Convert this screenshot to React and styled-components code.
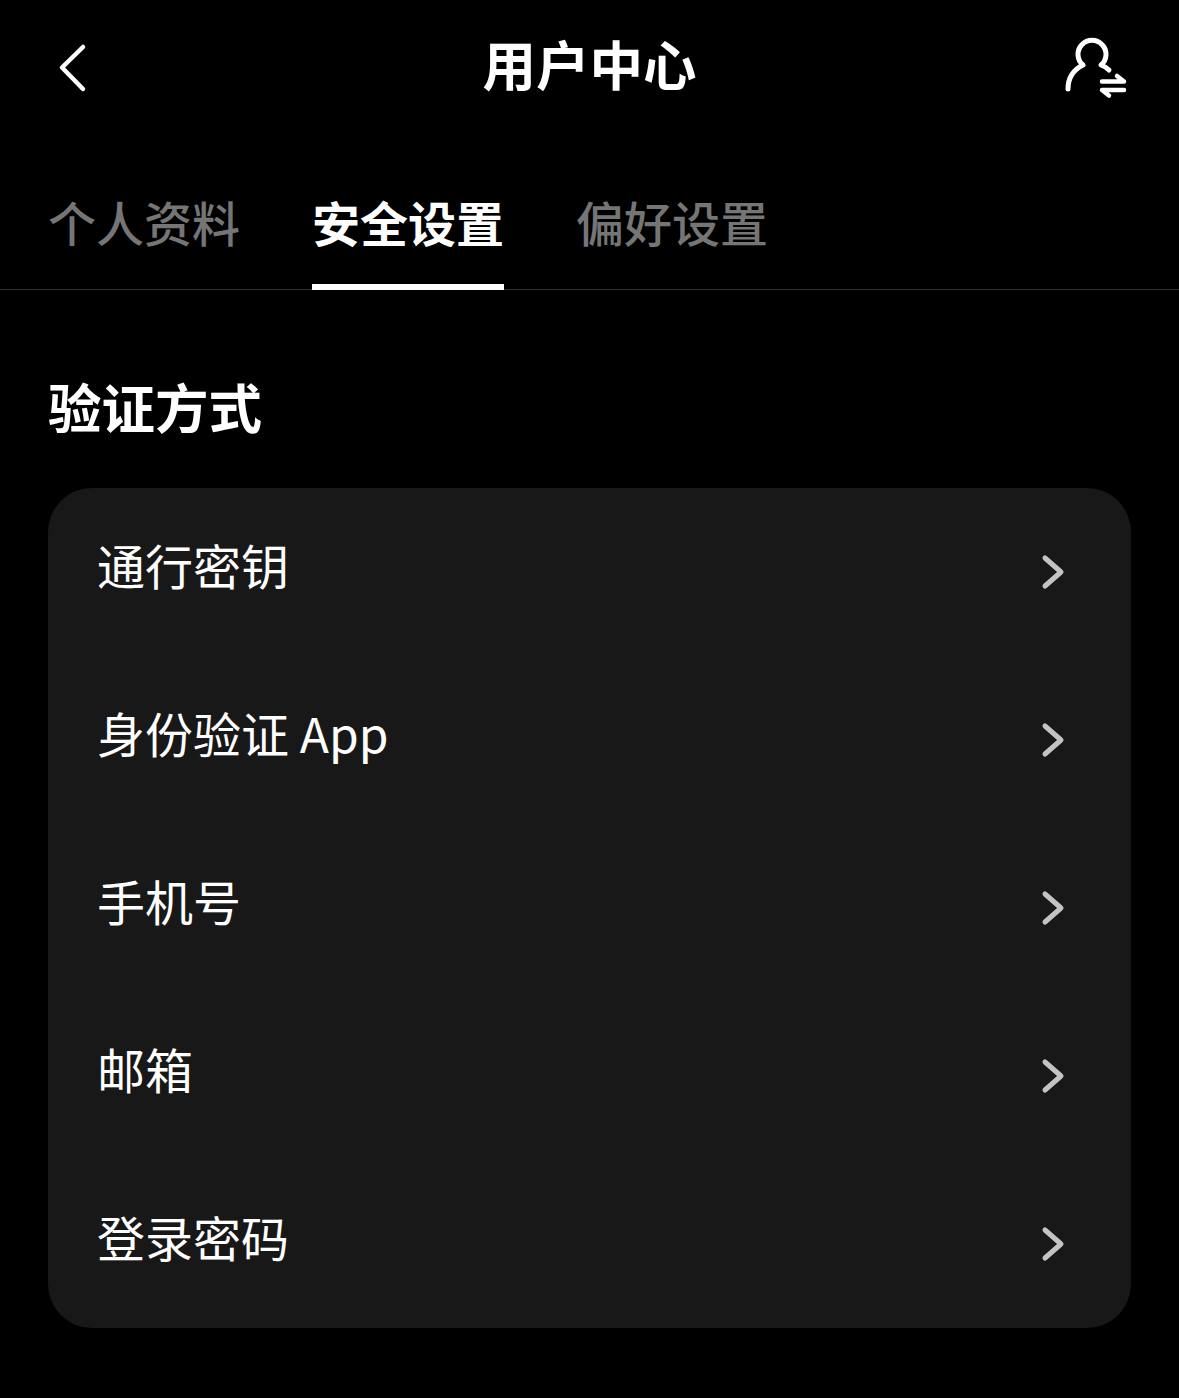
import styled, { createGlobalStyle } from "styled-components";

const items = ["通行密钥", "身份验证 App", "手机号", "邮箱", "登录密码"];
const tabs = ["个人资料", "安全设置", "偏好设置"];

const App = () => {
  return (
    <Page>
      <GlobalStyle />
      <Header>
        <HeaderIcon>
          <svg width="40" height="60" viewBox="0 0 40 60" fill="none">
            <path d="M31 10 L10 30.5 L31 52" stroke="#fff" strokeWidth="4.5" strokeLinecap="round" strokeLinejoin="round" />
          </svg>
        </HeaderIcon>
        <Title>用户中心</Title>
        <HeaderIcon>
          <svg width="64" height="64" viewBox="0 0 64 64" fill="none">
            <path
              d="M5 54 C5 43 10 35 20 30 A14 14 0 1 1 38 30 C41 31 44 33 46 35"
              stroke="#fff"
              strokeWidth="5"
              strokeLinecap="round"
              strokeLinejoin="round"
            />
            <path d="M39 46.5 H61 L54 41" stroke="#fff" strokeWidth="4.5" strokeLinecap="round" strokeLinejoin="round" />
            <path d="M61 55 H39 L46 60.5" stroke="#fff" strokeWidth="4.5" strokeLinecap="round" strokeLinejoin="round" />
          </svg>
        </HeaderIcon>
      </Header>

      <TabBar>
        {tabs.map((tab, i) => (
          <Tab key={tab} $active={i === 1}>
            {tab}
          </Tab>
        ))}
      </TabBar>

      <Section>
        <SectionTitle>验证方式</SectionTitle>
        <Card>
          {items.map((item) => (
            <Row key={item}>
              <RowLabel>{item}</RowLabel>
              <svg width="24" height="36" viewBox="0 0 24 36" fill="none">
                <path d="M4 4 L20 18 L4 32" stroke="#c4c4c4" strokeWidth="5" strokeLinecap="round" strokeLinejoin="round" />
              </svg>
            </Row>
          ))}
        </Card>
      </Section>
    </Page>
  );
};

const GlobalStyle = createGlobalStyle`
  html, body {
    margin: 0;
    background: #000;
  }
`;

const Page = styled.div`
  width: 1179px;
  height: 1398px;
  background: #000;
  color: #fff;
  font-family: "Noto Sans CJK SC", "Inter", sans-serif;
  overflow: hidden;
`;

const Header = styled.div`
  height: 134px;
  padding: 0 52px;
  display: flex;
  align-items: center;
  justify-content: space-between;
`;

const HeaderIcon = styled.div`
  width: 64px;
  display: flex;
`;

const Title = styled.div`
  font-size: 53.5px;
  font-weight: 700;
  line-height: 1;
  margin-top: -8px;
`;

const TabBar = styled.div`
  height: 156px;
  box-sizing: border-box;
  padding: 0 48px;
  display: flex;
  gap: 72px;
  border-bottom: 1px solid #333;
`;

const Tab = styled.div`
  height: 156px;
  box-sizing: border-box;
  display: flex;
  align-items: center;
  font-size: 48px;
  line-height: 1;
  padding-top: 24px;
  font-weight: ${(p) => (p.$active ? 700 : 500)};
  color: ${(p) => (p.$active ? "#fff" : "#757575")};
  border-bottom: 6px solid ${(p) => (p.$active ? "#fff" : "transparent")};
`;

const Section = styled.div`
  padding: 0 48px;
`;

const SectionTitle = styled.h2`
  margin: 0;
  padding-top: 84px;
  height: 114px;
  font-size: 53.5px;
  font-weight: 700;
  line-height: 64px;
`;

const Card = styled.div`
  width: 1083px;
  height: 840px;
  box-sizing: border-box;
  padding: 0 66px 0 49px;
  background: #181818;
  border-radius: 44px;
  display: flex;
  flex-direction: column;
`;

const Row = styled.div`
  height: 168px;
  display: flex;
  align-items: center;
  justify-content: space-between;
`;

const RowLabel = styled.div`
  font-size: 48px;
  line-height: 1;
  font-weight: 400;
  margin-top: -16px;
`;

export default App;
